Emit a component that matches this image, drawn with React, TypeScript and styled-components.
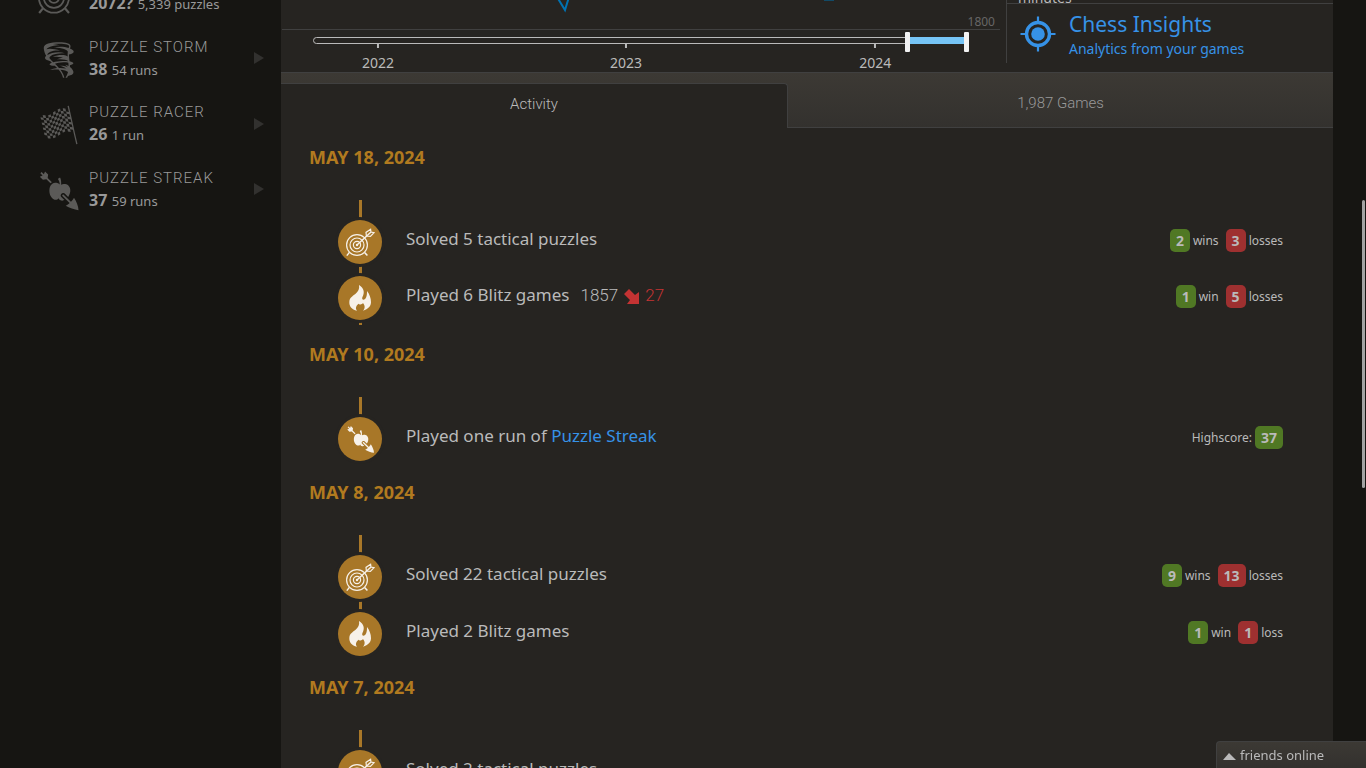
import React, { useState } from 'react';
import styled, { createGlobalStyle, css } from 'styled-components';
import { GiTornado, GiCheckeredFlag, GiWilliamTell } from 'react-icons/gi';

const c = {
  page: '#161512',
  box: '#262421',
  border: '#404040',
  text: '#bababa',
  dim: '#999999',
  accent: '#a87728',
  date: '#b17a1f',
  link: '#3692e7',
  good: '#507824',
  bad: '#9e3030',
};
const metal = 'linear-gradient(to bottom, #3c3934, #33312e)';
const roboto = "Roboto, 'Liberation Sans', sans-serif";

const GlobalStyle = createGlobalStyle`
  *, *::before, *::after { box-sizing: border-box; }
  body {
    margin: 0;
    background: ${c.page};
    color: ${c.text};
    font: 14px/21px 'Noto Sans', sans-serif;
  }
  a { color: ${c.link}; text-decoration: none; }
  h2, h3, p { margin: 0; }
`;

const Page = styled.div`
  display: flex;
  height: 100vh;
  overflow: hidden;
`;

/* ---------- ratings column ---------- */
const Side = styled.aside`
  flex: 0 0 281px;
`;
const Ratings = styled.nav`
  display: grid;
  grid-auto-rows: 1fr;
  height: 262px;
  margin-top: -40px;
`;
const RatingLink = styled.a`
  display: flex;
  align-items: center;
  padding: 0 17px 0 38px;
  color: ${c.dim};
`;
const RatingIcon = styled.span`
  display: flex;
  justify-content: center;
  width: 42px;
  margin-right: 9px;
  padding-top: 3px;
  color: #5b5a58;
`;
const RatingBody = styled.span`
  flex: 1;
`;
const RatingTitle = styled.h3`
  font: 300 15px/22px ${roboto};
  letter-spacing: 1px;
  text-transform: uppercase;
  color: ${c.dim};
`;
const RatingValue = styled.span`
  display: block;
  font-size: 13px;
  line-height: 22px;
  strong { margin-right: 1px; font-size: 16px; }
`;
const Chevron = styled.span`
  border: solid transparent;
  border-width: 6px 0 6px 10px;
  border-left-color: #32312f;
`;

/* ---------- main box ---------- */
const Main = styled.main`
  flex: 1;
  min-width: 0;
  margin-right: 33px;
  background: ${c.box};
`;
const Overview = styled.section`
  display: flex;
  height: 72px;
`;
const Chart = styled.div`
  flex: 1;
  margin-right: 6px;
`;
const Plot = styled.div`
  position: relative;
  height: 30px;
  margin-left: 1px;
  border-bottom: 1px solid ${c.border};
  svg { display: block; width: 100%; height: 29px; }
`;
const PlotLabel = styled.span`
  position: absolute;
  right: 5px;
  bottom: 0;
  font-size: 12px;
  line-height: 14px;
  color: #666;
`;
const Slider = styled.div`
  position: relative;
  margin: 7px 31px 0 32px;
`;
const Track = styled.div`
  height: 7px;
  border: 1px solid ${c.text};
  border-radius: 4px;
`;
const Fill = styled.div`
  position: absolute;
  top: 0;
  height: 7px;
  background: #76c4f5;
`;
const thumb = css`
  appearance: none;
  width: 5px;
  height: 20px;
  border: 0;
  border-radius: 1px;
  background: #f2f2f2;
  pointer-events: auto;
`;
const Range = styled.input`
  appearance: none;
  position: absolute;
  left: 0;
  top: -5px;
  width: 100%;
  height: 20px;
  margin: 0;
  background: none;
  pointer-events: none;
  &::-webkit-slider-thumb { ${thumb} }
  &::-moz-range-thumb { ${thumb} }
`;
const Tick = styled.span`
  position: absolute;
  top: 7px;
  display: flex;
  flex-direction: column;
  align-items: center;
  transform: translateX(-50%);
  line-height: 20px;
  padding-top: 9px;
  &::before {
    content: '';
    position: absolute;
    top: 0;
    width: 2px;
    height: 4px;
    background: ${c.text};
  }
`;
const Stats = styled.div`
  width: 327px;
  height: 63px;
  border-left: 1px solid ${c.border};
`;
const PlayTime = styled.p`
  margin-top: -7px;
  padding-left: 11px;
  line-height: 10px;
`;
const Insights = styled.a`
  display: flex;
  gap: 13px;
  padding: 6px 0 0 13px;
  border-top: 1px solid ${c.border};
`;
const InsightsIcon = styled.svg`
  width: 36px;
  height: 36px;
  margin-top: 6px;
`;
const InsightsText = styled.span`
  display: flex;
  flex-direction: column;
  line-height: 21px;
  strong { font-weight: 400; font-size: 21px; line-height: 28px; }
`;

const Tabs = styled.div`
  display: flex;
  height: 56px;
  border-top: 1px solid ${c.border};
  background: ${metal};
`;
const Tab = styled.button<{ $active?: boolean }>`
  flex: 1 1 auto;
  padding: 10px 0 5px;
  border: 0;
  border-bottom: 1px solid ${c.border};
  background: none;
  color: ${c.dim};
  font: 300 15px/22px ${roboto};
  cursor: pointer;
  ${p => p.$active && css`
    margin-top: 10px;
    padding: 4px 0 8px;
    border: 1px solid ${c.border};
    border-width: 1px 1px 0 0;
    border-radius: 0 4px 0 0;
    background: ${c.box};
    color: ${c.text};
  `}
`;

/* ---------- activity feed ---------- */
const Feed = styled.div`
  padding: 16px 50px 0 28px;
`;
const Day = styled.section`
  padding-bottom: 16px;
`;
const DayTitle = styled.h2`
  font-size: 18px;
  line-height: 27px;
  text-transform: uppercase;
  color: ${c.date};
`;
const Entries = styled.div`
  position: relative;
  margin-top: 29px;
  padding: 9px 0 0 29px;
  &::before {
    content: '';
    position: absolute;
    left: 50px;
    top: 0;
    bottom: 0;
    width: 3px;
    background: ${c.accent};
  }
`;
const Entry = styled.div<{ $rated?: boolean }>`
  display: flex;
  align-items: flex-start;
  padding: ${p => (p.$rated ? '10px 0 5px' : '11px 0 2px')};
`;
const Badge = styled.span`
  position: relative;
  display: flex;
  align-items: center;
  justify-content: center;
  width: 44px;
  height: 44px;
  border-radius: 50%;
  background: ${c.accent};
  box-shadow: 0 0 0 3px ${c.box};
  color: #f7f1e9;
`;
const EntryText = styled.div`
  flex: 1;
  display: flex;
  align-items: center;
  padding-left: 24px;
  font-size: 17px;
  line-height: 38px;
  white-space: pre;
`;
const Progress = styled.span`
  display: flex;
  align-items: center;
  gap: 6px;
  margin-left: 11px;
  font-family: ${roboto};
  font-weight: 300;
  svg { margin-top: 4px; }
`;
const Drop = styled.span`
  display: flex;
  align-items: center;
  gap: 5px;
  color: #c43333;
`;
const Scores = styled.div`
  display: flex;
  gap: 7px;
  padding-top: 9px;
  font-size: 12px;
  line-height: 24px;
`;
const Score = styled.span`
  display: flex;
  gap: 3px;
`;
const Count = styled.strong<{ $bad?: boolean }>`
  height: 23px;
  padding: 0 6px;
  border-radius: 5px;
  background: ${p => (p.$bad ? c.bad : c.good)};
  font-size: 14px;
  line-height: 24px;
`;

/* ---------- overlays ---------- */
const Friends = styled.button`
  position: fixed;
  right: 0;
  bottom: 0;
  display: flex;
  align-items: center;
  gap: 4px;
  width: 150px;
  height: 27px;
  padding: 0 6px 1px;
  border: 1px solid ${c.border};
  border-width: 1px 0 0 1px;
  border-radius: 4px 0 0 0;
  background: ${metal};
  color: ${c.text};
  font: 13px/24px 'Noto Sans', sans-serif;
  &::before {
    content: '';
    margin-top: 4px;
    border: solid transparent;
    border-width: 0 7px 7px 6px;
    border-bottom-color: ${c.text};
  }
`;
const ScrollThumb = styled.div`
  position: fixed;
  right: 1px;
  top: 26%;
  width: 3px;
  height: 288px;
  border-radius: 2px;
  background: #a3a3a3;
`;

const Target = ({ size }: { size: number }) => (
  <svg width={size} height={size} viewBox="8 8 29 29" fill="none" stroke="currentColor" strokeWidth="1.2">
    <circle cx="19" cy="25" r="10.4" />
    <circle cx="19" cy="25" r="7" />
    <circle cx="19" cy="25" r="3.6" />
    <circle cx="19" cy="25" r="1.2" fill="currentColor" stroke="none" />
    <path d="M11.4 32.4L8.8 35.6M26.6 32.4L29.4 35.6" strokeWidth="1.5" />
    <path d="M19 25L33 12" strokeWidth="1.5" />
    <path d="M28.4 16L28 12.4L32.6 9.2L33 12L36 12.6L32.4 16.4Z" />
  </svg>
);

const Flame = () => (
  <svg width="22" height="26" viewBox="0 0 66 78" fill="currentColor">
    <path d="M30 0C45 9 48 22 40 37C38 44 43 47 49 41C54 35 54 25 54 18C62 28 66 40 66 52C66 63 58 73 42 77C50 70 47 59 42 55C38 59 33 60 29 56C21 62 18 70 24 77C8 74 0 63 1 50C2 38 10 34 19 27C28 19 32 12 30 0Z" />
  </svg>
);

const DownArrow = () => (
  <svg width="16" height="16" viewBox="0 0 16 16" fill="currentColor">
    <path d="M5 0L11 6L15 3V15H3L6 11L0 5Z" />
  </svg>
);

const badges = {
  puzzle: <Target size={29} />,
  blitz: <Flame />,
  streak: <GiWilliamTell size={29} />,
};

type Result = { n: number; label: string; bad?: boolean };
type Item = {
  kind: keyof typeof badges;
  text: string;
  link?: string;
  rating?: [number, number];
  prefix?: string;
  scores: Result[];
};

const days: { date: string; items: Item[] }[] = [
  {
    date: 'May 18, 2024',
    items: [
      { kind: 'puzzle', text: 'Solved 5 tactical puzzles', scores: [{ n: 2, label: 'wins' }, { n: 3, label: 'losses', bad: true }] },
      { kind: 'blitz', text: 'Played 6 Blitz games', rating: [1857, 27], scores: [{ n: 1, label: 'win' }, { n: 5, label: 'losses', bad: true }] },
    ],
  },
  {
    date: 'May 10, 2024',
    items: [{ kind: 'streak', text: 'Played one run of ', link: 'Puzzle Streak', prefix: 'Highscore:', scores: [{ n: 37, label: '' }] }],
  },
  {
    date: 'May 8, 2024',
    items: [
      { kind: 'puzzle', text: 'Solved 22 tactical puzzles', scores: [{ n: 9, label: 'wins' }, { n: 13, label: 'losses', bad: true }] },
      { kind: 'blitz', text: 'Played 2 Blitz games', scores: [{ n: 1, label: 'win' }, { n: 1, label: 'loss', bad: true }] },
    ],
  },
  {
    date: 'May 7, 2024',
    items: [{ kind: 'puzzle', text: 'Solved 2 tactical puzzles', scores: [] }],
  },
];

const ratings = [
  { title: 'Puzzles', value: '2072?', count: '5,339 puzzles', icon: <Target size={42} /> },
  { title: 'Puzzle Storm', value: '38', count: '54 runs', icon: <GiTornado size={38} /> },
  { title: 'Puzzle Racer', value: '26', count: '1 run', icon: <GiCheckeredFlag size={42} /> },
  { title: 'Puzzle Streak', value: '37', count: '59 runs', icon: <GiWilliamTell size={42} /> },
];

const years = [
  { year: 2022, at: 9.9 },
  { year: 2023, at: 47.7 },
  { year: 2024, at: 85.7 },
];

export default function App() {
  const [from, setFrom] = useState(909);
  const [to, setTo] = useState(1000);
  return (
    <>
      <GlobalStyle />
      <Page>
        <Side>
          <Ratings>
            {ratings.map(r => (
              <RatingLink href="#" key={r.title}>
                <RatingIcon>{r.icon}</RatingIcon>
                <RatingBody>
                  <RatingTitle>{r.title}</RatingTitle>
                  <RatingValue><strong>{r.value}</strong> {r.count}</RatingValue>
                </RatingBody>
                <Chevron />
              </RatingLink>
            ))}
          </Ratings>
        </Side>
        <Main>
          <Overview>
            <Chart>
              <Plot>
                <svg viewBox="0 0 718 29" preserveAspectRatio="none">
                  <path d="M275 -3L283 10L287 -3" fill="none" stroke="#0072b2" strokeWidth="2" />
                  <path d="M542 0H552" stroke="#124a66" strokeWidth="2" />
                </svg>
                <PlotLabel>1800</PlotLabel>
              </Plot>
              <Slider>
                <Track />
                <Fill style={{ left: `${from / 10}%`, right: `${100 - to / 10}%` }} />
                <Range type="range" aria-label="From" min={0} max={1000} value={from} onChange={e => setFrom(Math.min(+e.target.value, to))} />
                <Range type="range" aria-label="To" min={0} max={1000} value={to} onChange={e => setTo(Math.max(+e.target.value, from))} />
                {years.map(y => <Tick key={y.year} style={{ left: `${y.at}%` }}>{y.year}</Tick>)}
              </Slider>
            </Chart>
            <Stats>
              <PlayTime>minutes</PlayTime>
              <Insights href="#">
                <InsightsIcon viewBox="0 0 36 36" fill="none" stroke="currentColor">
                  <circle cx="18" cy="18" r="11.5" strokeWidth="3.4" />
                  <circle cx="18" cy="18" r="6.8" fill="currentColor" stroke="none" />
                  <path d="M18 0.5V6M18 30V35.5M0.5 18H6M30 18H35.5" strokeWidth="2.2" />
                </InsightsIcon>
                <InsightsText>
                  <strong>Chess Insights</strong>
                  Analytics from your games
                </InsightsText>
              </Insights>
            </Stats>
          </Overview>
          <Tabs>
            <Tab $active>Activity</Tab>
            <Tab>1,987 Games</Tab>
          </Tabs>
          <Feed>
            {days.map(d => (
              <Day key={d.date}>
                <DayTitle>{d.date}</DayTitle>
                <Entries>
                  {d.items.map(it => (
                    <Entry key={it.text} $rated={!!it.rating}>
                      <Badge>{badges[it.kind]}</Badge>
                      <EntryText>
                        <span>{it.text}{it.link && <a href="#">{it.link}</a>}</span>
                        {it.rating && (
                          <Progress>
                            {it.rating[0]}
                            <Drop><DownArrow />{it.rating[1]}</Drop>
                          </Progress>
                        )}
                      </EntryText>
                      <Scores>
                        {it.scores.map(s => (
                          <Score key={s.label}>
                            {it.prefix}
                            <Count $bad={s.bad}>{s.n}</Count>
                            {s.label}
                          </Score>
                        ))}
                      </Scores>
                    </Entry>
                  ))}
                </Entries>
              </Day>
            ))}
          </Feed>
        </Main>
      </Page>
      <Friends>friends online</Friends>
      <ScrollThumb />
    </>
  );
}
